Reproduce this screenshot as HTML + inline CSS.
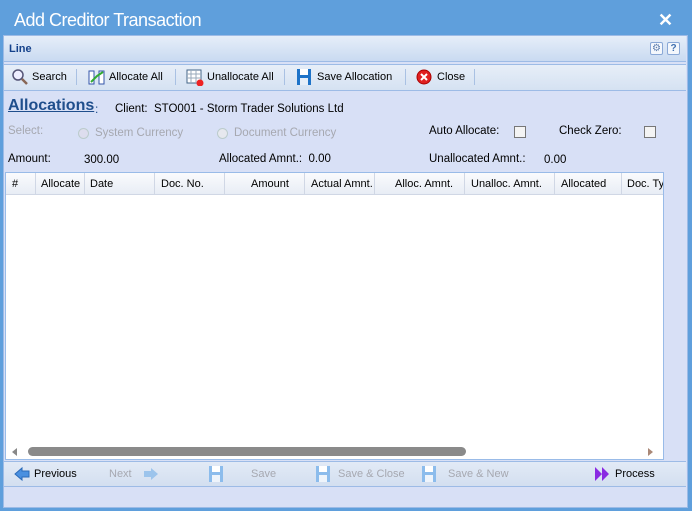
<!DOCTYPE html>
<html><head><meta charset="utf-8"><style>
*{box-sizing:border-box;margin:0;padding:0}
body{width:692px;height:511px;background:#5f9fdc;font-family:"Liberation Sans",sans-serif;font-size:12px;color:#000;position:relative;overflow:hidden}
.a{position:absolute}
.title{left:14px;top:10px;color:#fff;font-size:18px;letter-spacing:-0.5px}
.x{left:658px;top:10px;color:#fff;font-size:18px;font-weight:bold}
.panel{left:3px;top:35px;width:685px;height:473px;background:#d8e0f6;border:1px solid #9dbbe6}
.line{left:4px;top:36px;width:682px;height:26px;background:linear-gradient(#e6eef9,#c9daf1);border-bottom:1px solid #9dbbe6}
.tb{left:4px;top:64px;width:682px;height:27px;background:linear-gradient(#e7eef8,#d5e2f2);border-top:1px solid #9dbbe6;border-bottom:1px solid #9dbbe6}
.tbi{top:71px;font-size:11px}
.sep{top:69px;width:1px;height:16px;background:#a9c1e3}
.dis{color:#a6a8b0}
.grid{left:5px;top:172px;width:659px;height:288px;background:#fff;border:1px solid #99bbe8}
.gh{left:6px;top:173px;width:657px;height:22px;background:linear-gradient(#fafbfd,#e8edf5);border-bottom:1px solid #d0d7e5}
.gh span{position:absolute;top:5px;font-size:11px;height:22px}
.gh i{position:absolute;top:0;width:1px;height:22px;background:#d0d7e5}
.bb{left:4px;top:461px;width:682px;height:26px;background:linear-gradient(#e2eaf6,#d3dff0);border-top:1px solid #9dbbe6;border-bottom:1px solid #9dbbe6}
.cb{width:12px;height:12px;border:1px solid #777;background:#f4f4f4}
.t{font-size:11.5px}
</style></head><body>
<div class="a title">Add Creditor Transaction</div>
<div class="a x">✕</div>
<div class="a panel"></div>
<div class="a line"></div>
<div class="a" style="left:9px;top:43px;font-size:11px;font-weight:bold;color:#15428b">Line</div>
<div class="a" style="left:650px;top:42px;width:13px;height:13px;border:1px solid #8aa8d6;border-radius:2px;background:#f4f7fc;color:#6080b0;font-size:10px;text-align:center;line-height:11px">⚙</div>
<div class="a" style="left:667px;top:42px;width:13px;height:13px;border:1px solid #8aa8d6;border-radius:2px;background:#f4f7fc;color:#4070b0;font-size:10px;font-weight:bold;text-align:center;line-height:11px">?</div>
<div class="a tb"></div>
<svg class="a" style="left:11px;top:68px" width="18" height="18"><circle cx="7" cy="7" r="5" fill="#eef" stroke="#557" stroke-width="1.5"/><line x1="11" y1="11" x2="16" y2="16" stroke="#865" stroke-width="2.5"/></svg>
<div class="a tbi" style="left:32px">Search</div>
<div class="a sep" style="left:76px"></div>
<svg class="a" style="left:88px;top:69px" width="18" height="17"><rect x="1" y="2" width="5" height="13" fill="#fff" stroke="#35a"/><rect x="11" y="2" width="5" height="13" fill="#fff" stroke="#35a"/><path d="M3 13 L9 7 L15 3" stroke="#3a3" stroke-width="2" fill="none"/></svg>
<div class="a tbi" style="left:109px">Allocate All</div>
<div class="a sep" style="left:175px"></div>
<svg class="a" style="left:186px;top:69px" width="18" height="17"><rect x="1" y="1" width="14" height="13" fill="#fff" stroke="#468"/><path d="M1 5H15M1 9H15M5 1V14M10 1V14" stroke="#9ab"/><circle cx="14" cy="14" r="3.5" fill="#e22"/></svg>
<div class="a tbi" style="left:207px">Unallocate All</div>
<div class="a sep" style="left:284px"></div>
<svg class="a" style="left:296px;top:68px" width="16" height="18"><rect x="1" y="1" width="14" height="16" fill="#1e73c8"/><rect x="4" y="1" width="8" height="6" fill="#fff"/><rect x="4" y="10" width="8" height="7" fill="#e6eef8"/></svg>
<div class="a tbi" style="left:317px">Save Allocation</div>
<div class="a sep" style="left:405px"></div>
<svg class="a" style="left:416px;top:69px" width="16" height="16"><circle cx="8" cy="8" r="7" fill="#e02020" stroke="#a00"/><path d="M5 5L11 11M11 5L5 11" stroke="#fff" stroke-width="2"/></svg>
<div class="a tbi" style="left:437px">Close</div>
<div class="a sep" style="left:474px"></div>
<div class="a" style="left:8px;top:97px;font-size:16px;font-weight:bold;color:#1f4e8c;text-decoration:underline">Allocations</div>
<div class="a" style="left:95px;top:102px;color:#1f4e8c">:</div>
<div class="a t" style="left:115px;top:103px">Client:&nbsp; STO001 - Storm Trader Solutions Ltd</div>
<div class="a dis t" style="left:8px;top:125px">Select:</div>
<div class="a" style="left:78px;top:128px;width:11px;height:11px;border-radius:50%;border:1px solid #bcc;background:#dde"></div>
<div class="a dis t" style="left:95px;top:127px">System Currency</div>
<div class="a" style="left:217px;top:128px;width:11px;height:11px;border-radius:50%;border:1px solid #bcc;background:#e6e8ee"></div>
<div class="a dis t" style="left:234px;top:127px">Document Currency</div>
<div class="a t" style="left:429px;top:125px">Auto Allocate:</div>
<div class="a cb" style="left:514px;top:126px"></div>
<div class="a t" style="left:559px;top:125px">Check Zero:</div>
<div class="a cb" style="left:644px;top:126px"></div>
<div class="a t" style="left:8px;top:153px">Amount:</div>
<div class="a t" style="left:84px;top:154px">300.00</div>
<div class="a t" style="left:219px;top:153px">Allocated Amnt.:&nbsp; 0.00</div>
<div class="a t" style="left:429px;top:153px">Unallocated Amnt.:</div>
<div class="a t" style="left:544px;top:154px">0.00</div>
<div class="a grid"></div>
<div class="a gh">
<span style="left:6px">#</span><i style="left:29px"></i>
<span style="left:35px">Allocate</span><i style="left:78px"></i>
<span style="left:84px">Date</span><i style="left:148px"></i>
<span style="left:155px">Doc. No.</span><i style="left:218px"></i>
<span style="left:245px">Amount</span><i style="left:298px"></i>
<span style="left:305px">Actual Amnt.</span><i style="left:368px"></i>
<span style="left:389px">Alloc. Amnt.</span><i style="left:458px"></i>
<span style="left:465px">Unalloc. Amnt.</span><i style="left:548px"></i>
<span style="left:555px">Allocated</span><i style="left:615px"></i>
<span style="left:621px;width:36px;overflow:hidden;white-space:nowrap">Doc. Type</span>
</div>
<div class="a" style="left:12px;top:448px;width:0;height:0;border-top:4px solid transparent;border-bottom:4px solid transparent;border-right:5px solid #888"></div>
<div class="a" style="left:28px;top:447px;width:438px;height:9px;border-radius:5px;background:#8a8a8a"></div>
<div class="a" style="left:648px;top:448px;width:0;height:0;border-top:4px solid transparent;border-bottom:4px solid transparent;border-left:5px solid #a87"></div>
<div class="a bb"></div>
<svg class="a" style="left:14px;top:466px" width="16" height="16"><path d="M1 8L8 2V5H15V11H8V14Z" fill="#4a90e0" stroke="#2a6ab8"/></svg>
<div class="a tbi" style="left:34px;top:468px">Previous</div>
<div class="a tbi dis" style="left:109px;top:468px">Next</div>
<svg class="a" style="left:143px;top:466px" width="16" height="16"><path d="M15 8L8 2V5H1V11H8V14Z" fill="#9cc4ec"/></svg>
<svg class="a" style="left:208px;top:465px" width="16" height="18"><rect x="1" y="1" width="14" height="16" fill="#8cbcec"/><rect x="4" y="1" width="8" height="6" fill="#fff"/><rect x="4" y="10" width="8" height="7" fill="#eef4fb"/></svg>
<div class="a tbi dis" style="left:251px;top:468px">Save</div>
<svg class="a" style="left:315px;top:465px" width="16" height="18"><rect x="1" y="1" width="14" height="16" fill="#8cbcec"/><rect x="4" y="1" width="8" height="6" fill="#fff"/><rect x="4" y="10" width="8" height="7" fill="#eef4fb"/></svg>
<div class="a tbi dis" style="left:338px;top:468px">Save &amp; Close</div>
<svg class="a" style="left:421px;top:465px" width="16" height="18"><rect x="1" y="1" width="14" height="16" fill="#8cbcec"/><rect x="4" y="1" width="8" height="6" fill="#fff"/><rect x="4" y="10" width="8" height="7" fill="#eef4fb"/></svg>
<div class="a tbi dis" style="left:448px;top:468px">Save &amp; New</div>
<svg class="a" style="left:594px;top:466px" width="16" height="16"><path d="M1 1L8 8L1 15ZM8 1L15 8L8 15Z" fill="#8a2be2"/></svg>
<div class="a tbi" style="left:615px;top:468px">Process</div>
</body></html>
